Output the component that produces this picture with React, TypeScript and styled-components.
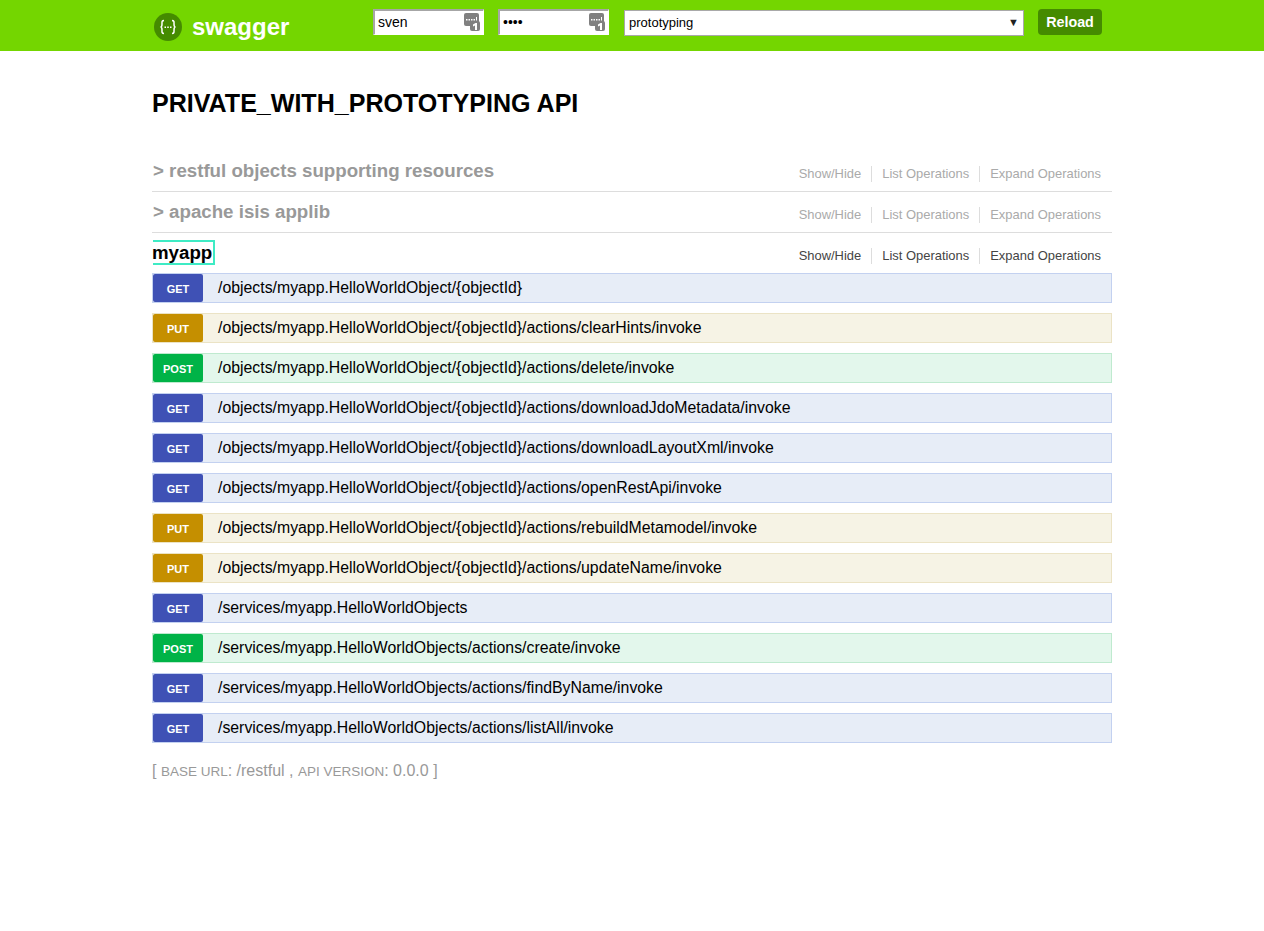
import React from "react"
import styled,{createGlobalStyle} from "styled-components"

const Global = createGlobalStyle`
	html,body{
		margin:0;
		padding:0;
		background:#fff;
		font-family:"Liberation Sans",Arial,sans-serif;
	}
`

const Header = styled.header`
	height:51px;
	background:#74d600;
	box-sizing:border-box;
`
const HeaderInner = styled.div`
	width:960px;
	margin:0 auto;
	height:100%;
	display:flex;
	align-items:flex-start;
`
const Logo = styled.a`
	display:flex;
	align-items:center;
	width:221px;
	height:51px;
	padding-top:3px;
	box-sizing:border-box;
	color:#fff;
	font-size:24px;
	font-weight:bold;
	gap:10px;
`
const LogoMark = styled.svg`
	width:28px;
	height:28px;
	flex:none;
	margin-left:2px;
`
const CredField = styled.div`
	position:relative;
	width:111px;
	height:26px;
	margin-top:9px;
	margin-right:14px;
	box-sizing:border-box;
	background:#fff;
	border:1px solid #fff;
	border-top:2px solid #a6a6a6;
	border-left:2px solid #a6a6a6;
	display:flex;
	align-items:center;
`
const CredInput = styled.input`
	border:0;
	outline:0;
	padding:0 0 2px 3px;
	width:80px;
	background:transparent;
	font-family:"Liberation Sans",Arial,sans-serif;
	font-size:14px;
	color:#000;
`
const KeyIcon = styled.svg`
	position:absolute;
	right:3px;
	top:2px;
	width:16px;
	height:18px;
`
const SpecSelect = styled.div`
	width:400px;
	height:26px;
	margin-top:10px;
	margin-left:1px;
	box-sizing:border-box;
	background:#fff;
	border:1px solid #a9a9a9;
	padding:0 4px 2px 4px;
	display:flex;
	align-items:center;
	justify-content:space-between;
	font-size:13px;
	color:#000;
`
const SelectArrow = styled.span`
	font-size:11px;
	color:#222;
`
const ReloadButton = styled.div`
	margin-left:14px;
	margin-top:9px;
	width:64px;
	height:26px;
	border-radius:4px;
	background:#458b00;
	color:#fff;
	font-size:14.3px;
	font-weight:bold;
	display:flex;
	align-items:center;
	justify-content:center;
`
const Main = styled.main`
	width:960px;
	margin:0 auto;
`
const Title = styled.h1`
	margin:0;
	padding-top:37px;
	height:100px;
	box-sizing:border-box;
	font-size:25.06px;
	line-height:30px;
	font-weight:bold;
	color:#000;
`
const ResourceHead = styled.div<{$ruled:boolean}>`
	height:${p=>p.$ruled?41:40}px;
	box-sizing:border-box;
	display:flex;
	justify-content:space-between;
	align-items:flex-start;
	border-bottom:${p=>p.$ruled?"1px solid #ddd":"0"};
`
const ResourceName = styled.h2<{$active:boolean}>`
	margin:${p=>p.$active?"7px 0 0 1px":"8px 0 0 1px"};
	font-size:18.7px;
	line-height:${p=>p.$active?21:24}px;
	font-weight:bold;
	color:${p=>p.$active?"#000":"#999"};
	${p=>p.$active&&`
		border:2px solid #3eebc4;
		border-left:0;
		text-indent:-1px;
		width:62px;
		height:25px;
		box-sizing:border-box;
	`}
`
const Links = styled.div<{$active:boolean}>`
	display:flex;
	margin:15px 1px 0 0;
	color:${p=>p.$active?"#444":"#aaa"};
	font-size:12.95px;
	line-height:16px;
`
const LinkItem = styled.span`
	padding:0 10px;
	border-right:1px solid #ddd;
	&:last-child{
		border-right:0;
	}
`
const OperationList = styled.div`
	display:flex;
	flex-direction:column;
	gap:10px;
`
const palette = {
	GET:{badge:"#3f51b5",row:"#e7edf7",line:"#c3d1f0"},
	PUT:{badge:"#c58f00",row:"#f6f3e5",line:"#ebe3c5"},
	POST:{badge:"#00b347",row:"#e3f7ec",line:"#bfeacf"},
}
type Method = keyof typeof palette
const Operation = styled.div<{$method:Method}>`
	height:30px;
	box-sizing:border-box;
	border:1px solid ${p=>palette[p.$method].line};
	background:${p=>palette[p.$method].row};
	display:flex;
	align-items:stretch;
`
const Badge = styled.span<{$method:Method}>`
	width:50px;
	background:${p=>palette[p.$method].badge};
	border-radius:2px;
	color:#fff;
	font-size:11px;
	font-weight:bold;
	display:flex;
	align-items:center;
	justify-content:center;
	padding-top:2px;
	box-sizing:border-box;
`
const Path = styled.span`
	margin-left:15px;
	font-size:15.84px;
	line-height:28px;
	color:#000;
`
const Footer = styled.div`
	margin-top:17px;
	font-size:16px;
	line-height:22px;
	color:#999;
`
const FooterLabel = styled.span`
	font-size:13.5px;
	text-transform:uppercase;
`

const ops:[Method,string][] = [
	["GET","/objects/myapp.HelloWorldObject/{objectId}"],
	["PUT","/objects/myapp.HelloWorldObject/{objectId}/actions/clearHints/invoke"],
	["POST","/objects/myapp.HelloWorldObject/{objectId}/actions/delete/invoke"],
	["GET","/objects/myapp.HelloWorldObject/{objectId}/actions/downloadJdoMetadata/invoke"],
	["GET","/objects/myapp.HelloWorldObject/{objectId}/actions/downloadLayoutXml/invoke"],
	["GET","/objects/myapp.HelloWorldObject/{objectId}/actions/openRestApi/invoke"],
	["PUT","/objects/myapp.HelloWorldObject/{objectId}/actions/rebuildMetamodel/invoke"],
	["PUT","/objects/myapp.HelloWorldObject/{objectId}/actions/updateName/invoke"],
	["GET","/services/myapp.HelloWorldObjects"],
	["POST","/services/myapp.HelloWorldObjects/actions/create/invoke"],
	["GET","/services/myapp.HelloWorldObjects/actions/findByName/invoke"],
	["GET","/services/myapp.HelloWorldObjects/actions/listAll/invoke"],
]

function Key(){
	return <KeyIcon viewBox="0 0 16 18">
		<rect x="0" y="0" width="15" height="13" rx="2" fill="#808080"/>
		<rect x="6" y="8" width="10" height="10" rx="2" fill="#808080"/>
		<path d="M2 6h1.500v1.500H2zM4.500 6H6v1.500H4.500zM7 6h1.500v1.500H7zM9.500 6H11v1.500H9.500z" fill="#fff"/>
		<path d="M12 4h1v3.500h-1z" fill="#fff"/>
		<path d="M9 11.500l2.500-1.500h1.500v7h-2v-4.500l-2 1z" fill="#fff"/>
	</KeyIcon>
}

function Resource(props:{name:string,active?:boolean,ruled?:boolean}){
	return <ResourceHead $ruled={!!props.ruled}>
		<ResourceName $active={!!props.active}>{props.name}</ResourceName>
		<Links $active={!!props.active}>
			<LinkItem>Show/Hide</LinkItem>
			<LinkItem>List Operations</LinkItem>
			<LinkItem>Expand Operations</LinkItem>
		</Links>
	</ResourceHead>
}

export default function App(){
	return <>
		<Global/>
		<Header>
			<HeaderInner>
				<Logo>
					<LogoMark viewBox="0 0 28 28">
						<circle cx="14" cy="14" r="14" fill="#458b00"/>
						<path d="M10 7.500c-2.500 0-2 2-2 3.500 0 1.500-.5 3-1.500 3 1 0 1.500 1.500 1.500 3 0 1.500-.5 3.500 2 3.500M18 7.500c2.500 0 2 2 2 3.500 0 1.500.5 3 1.500 3-1 0-1.500 1.500-1.500 3 0 1.500.5 3.500-2 3.500" fill="none" stroke="#fff" strokeWidth="1.500"/>
						<path d="M10.500 13.500H12V15h-1.500zM13.250 13.500h1.500V15h-1.500zM16 13.500h1.500V15H16z" fill="#fff"/>
					</LogoMark>
					swagger
				</Logo>
				<CredField>
					<CredInput readOnly value="sven"/>
					<Key/>
				</CredField>
				<CredField>
					<CredInput readOnly type="password" value="sven"/>
					<Key/>
				</CredField>
				<SpecSelect>
					prototyping
					<SelectArrow>▼</SelectArrow>
				</SpecSelect>
				<ReloadButton>Reload</ReloadButton>
			</HeaderInner>
		</Header>
		<Main>
			<Title>PRIVATE_WITH_PROTOTYPING API</Title>
			<Resource ruled name="> restful objects supporting resources"/>
			<Resource ruled name="> apache isis applib"/>
			<Resource active name="myapp"/>
			<OperationList>
				{ops.map(([method,path])=><Operation key={path} $method={method}>
					<Badge $method={method}>{method}</Badge>
					<Path>{path}</Path>
				</Operation>)}
			</OperationList>
			<Footer>
				[ <FooterLabel>Base URL</FooterLabel>: /restful , <FooterLabel>API Version</FooterLabel>: 0.0.0 ]
			</Footer>
		</Main>
	</>
}
